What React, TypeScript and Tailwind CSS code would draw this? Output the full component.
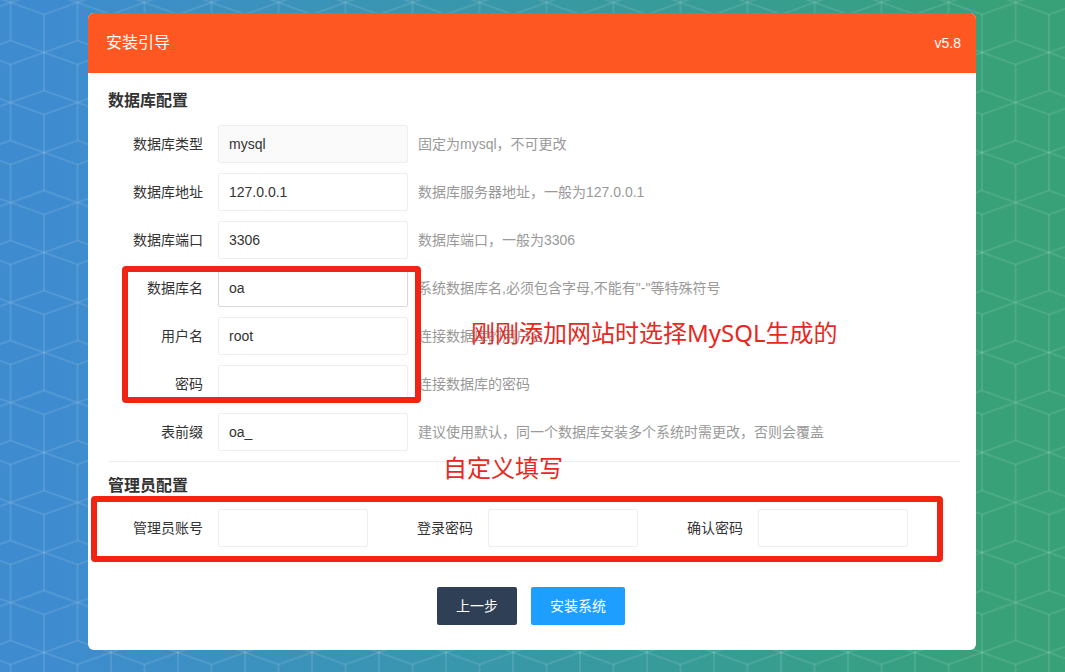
import React, { useState } from 'react';

type DbField = {
  name: string;
  label: string;
  hint: string;
  type?: string;
  disabled?: boolean;
  active?: boolean;
};

const serverFields: Array<DbField> = [
  { name: 'DB_TYPE', label: '数据库类型', hint: '固定为mysql，不可更改', disabled: true },
  { name: 'DB_HOST', label: '数据库地址', hint: '数据库服务器地址，一般为127.0.0.1' },
  { name: 'DB_PORT', label: '数据库端口', hint: '数据库端口，一般为3306' },
];

const accountFields: Array<DbField> = [
  { name: 'DB_NAME', label: '数据库名', hint: '系统数据库名,必须包含字母,不能有"-"等特殊符号', active: true },
  { name: 'DB_USER', label: '用户名', hint: '连接数据库的用户名' },
  { name: 'DB_PWD', label: '密码', hint: '连接数据库的密码', type: 'password' },
];

const prefixField: DbField = { name: 'DB_PREFIX', label: '表前缀', hint: '建议使用默认，同一个数据库安装多个系统时需更改，否则会覆盖' };

const adminFields = [
  { name: 'username', label: '管理员账号', type: 'text' },
  { name: 'password', label: '登录密码', type: 'password' },
  { name: 'password_confirm', label: '确认密码', type: 'password' },
];

export default function App() {
  const [values, setValues] = useState<Record<string, string>>({
    DB_TYPE: 'mysql',
    DB_HOST: '127.0.0.1',
    DB_PORT: '3306',
    DB_NAME: 'oa',
    DB_USER: 'root',
    DB_PREFIX: 'oa_',
  });

  function update(name: string, value: string) {
    setValues(prev => ({ ...prev, [name]: value }));
  }

  function renderField(field: DbField) {
    return <FieldRow key={field.name} field={field} value={values[field.name] ?? ''} onChange={update} />;
  }

  return (
    <div className="relative isolate min-h-screen bg-linear-to-r from-[#3e8ccf] from-6% to-[#38a178] to-94% pt-[13px] pr-[17px] pb-[22px] pl-4 font-['Liberation_Sans','Noto_Sans_CJK_SC',sans-serif] text-sm text-[#333]">
      <CubePattern />
      <main className="mx-auto max-w-[888px] overflow-hidden rounded-md bg-white">
        <header className="flex h-[60px] items-center justify-between bg-[#ff5722] pr-[15px] pl-[18px] text-white">
          <h1 className="text-base">安装引导</h1>
          <span>v5.8</span>
        </header>
        <form className="pt-1 pr-4 pb-[25px] pl-5" onSubmit={e => e.preventDefault()}>
          <h2 className="h-12 text-base leading-[48px] font-bold">数据库配置</h2>
          <div className="flex flex-col gap-[10px]">
            {serverFields.map(renderField)}
            <div className="relative flex flex-col gap-[10px]">
              {accountFields.map(renderField)}
              <div className="pointer-events-none absolute -top-[3px] bottom-0 left-[14px] w-[299px] rounded-sm border-6 border-[#f32314]" />
              <Note className="top-[46px] left-[363px]">刚刚添加网站时选择MySQL生成的</Note>
            </div>
            {renderField(prefixField)}
          </div>
          <div className="relative mt-[10px] h-12 border-t border-[#eee]">
            <h2 className="text-base leading-[48px] font-bold">管理员配置</h2>
            <Note className="-top-3 left-[335px]">自定义填写</Note>
          </div>
          <div className="relative flex gap-[10px]">
            {adminFields.map(({ name, label, type }) => (
              <div key={name} className="flex items-center">
                <label htmlFor={name} className="w-[110px] pr-[15px] text-right">{label}</label>
                <input
                  id={name}
                  name={name}
                  type={type}
                  value={values[name] ?? ''}
                  onChange={e => update(name, e.target.value)}
                  className="h-[38px] w-[150px] rounded-xs border border-[#eee] px-[10px] outline-none"
                />
              </div>
            ))}
            <div className="pointer-events-none absolute -top-[13px] right-[17px] -bottom-[15px] -left-[17px] rounded-sm border-6 border-[#f32314]" />
          </div>
          <div className="mt-10 flex justify-center gap-[14px] pr-[6px]">
            <button type="button" className="h-[38px] rounded-xs bg-[#2f4056] px-[19px] text-white">上一步</button>
            <button type="submit" className="h-[38px] rounded-xs bg-[#1e9fff] px-[19px] text-white">安装系统</button>
          </div>
        </form>
      </main>
    </div>
  );
}

interface FieldRowProps {
  field: DbField;
  value: string;
  onChange: (name: string, value: string) => void;
}

function FieldRow({ field, value, onChange }: FieldRowProps) {
  const { name, label, hint, type = 'text', disabled, active } = field;
  return (
    <div className="flex items-center">
      <label htmlFor={name} className="w-[110px] pr-[15px] text-right">{label}</label>
      <input
        id={name}
        name={name}
        type={type}
        value={value}
        disabled={disabled}
        onChange={e => onChange(name, e.target.value)}
        className={`h-[38px] w-[190px] rounded-xs border px-[10px] outline-none ${active ? 'border-[#d8d8d8]' : 'border-[#eee]'} ${disabled ? 'bg-[#fafafa]' : 'bg-white'}`}
      />
      <span className="pl-[10px] text-[#999]">{hint}</span>
    </div>
  );
}

function Note({ className, children }: { className: string; children: React.ReactNode }) {
  return (
    <p className={`pointer-events-none absolute font-['Noto_Sans','Noto_Sans_CJK_SC',sans-serif] text-2xl leading-9 whitespace-nowrap text-[#e8281e] ${className}`}>
      {children}
    </p>
  );
}

// isometric cubes, one tile holds two staggered columns
function CubePattern() {
  return (
    <svg className="absolute inset-0 -z-10 h-full w-full" aria-hidden="true">
      <defs>
        <pattern id="cubes" width="67" height="100" patternUnits="userSpaceOnUse" patternTransform="translate(10.5 2.5)">
          <g fill="none" stroke="#fff" strokeOpacity="0.2">
            <path d="M0 0V38M0 62V100M67 0V38M67 62V100M33.5 12V88" />
            <path d="M0 38L33.5 50L0 62M67 38L33.5 50L67 62" />
            <path d="M0 0L33.5 12L67 0M0 100L33.5 88L67 100" />
          </g>
        </pattern>
      </defs>
      <rect width="100%" height="100%" fill="url(#cubes)" />
    </svg>
  );
}
